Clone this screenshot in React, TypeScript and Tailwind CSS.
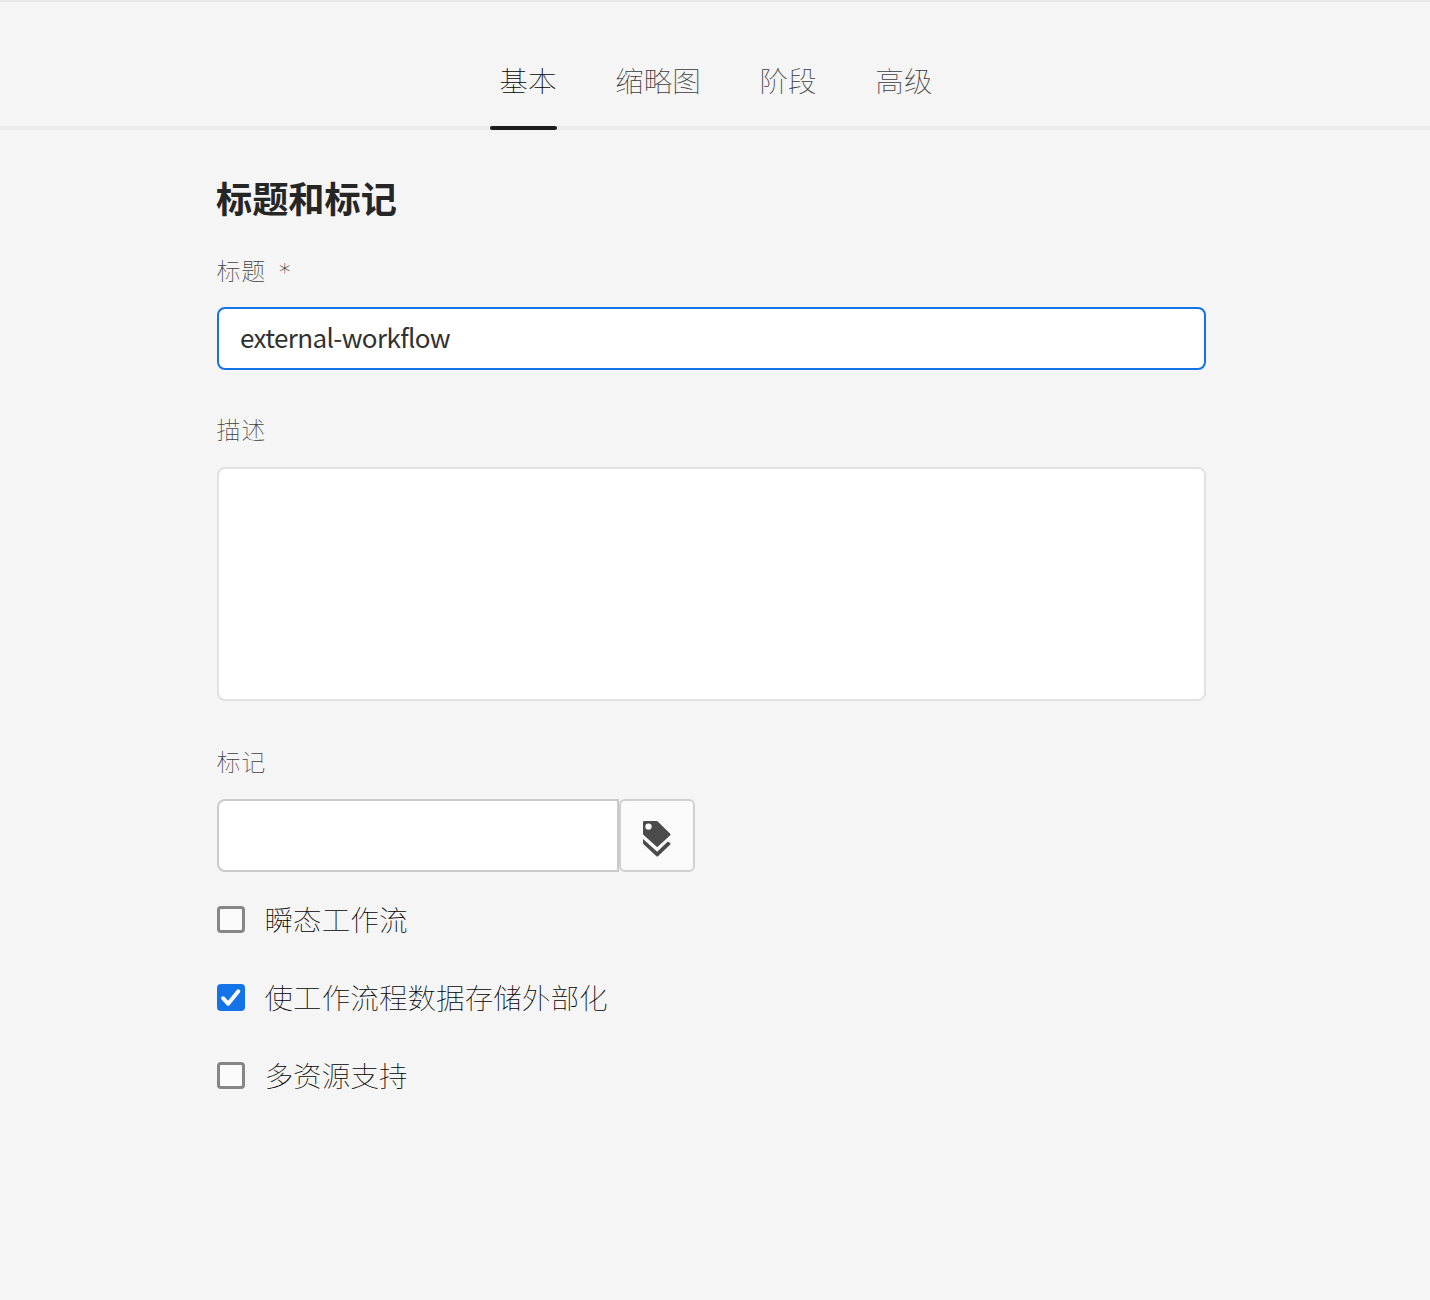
import { useState, type ReactNode } from "react";

const tabs = ["基本", "缩略图", "阶段", "高级"];

function Label({ children }: { children: ReactNode }) {
  return (
    <label className="flex h-6 text-[24px] leading-6 font-thin tracking-[0.7px] text-[#404040]">
      {children}
    </label>
  );
}

function Checkbox({ label, initial = false }: { label: string; initial?: boolean }) {
  const [on, setOn] = useState(initial);
  return (
    <button
      type="button"
      role="checkbox"
      aria-checked={on}
      onClick={() => setOn(!on)}
      className="flex h-[78px] items-center gap-5"
    >
      {on ? (
        <span className="flex h-[27px] w-7 items-center justify-center rounded bg-[#1473e6]">
          <svg width="28" height="27" viewBox="0 0 28 27" fill="none">
            <path d="M6 14.2 L11.2 19.8 L21.3 7.2" stroke="#fff" strokeWidth="3.9" strokeLinecap="round" strokeLinejoin="round" />
          </svg>
        </span>
      ) : (
        <span className="h-[27px] w-7 rounded border-3 border-[#868686] bg-[#fafafa]" />
      )}
      <span className="text-[28.6px] leading-8 font-thin text-black">{label}</span>
    </button>
  );
}

export default function App() {
  const [active, setActive] = useState(0);
  return (
    <div className="h-[1300px] w-full overflow-hidden border-t-2 border-[#e8e8e8] bg-[#f5f5f5] font-['Noto_Sans_CJK_SC',sans-serif]">
      <nav className="flex h-32 gap-[58.6px] border-b-4 border-[#eaeaea] pl-[499.3px]">
        {tabs.map((t, i) => (
          <button
            key={t}
            type="button"
            onClick={() => setActive(i)}
            className={
              i === active
                ? "relative flex h-32 items-start pt-[62px] text-[28.6px] leading-8 font-thin text-black"
                : "relative flex h-32 items-start pt-[62px] text-[28.6px] leading-8 font-thin text-[#3a3a3a]"
            }
          >
            {t}
            {i === active && <span className="absolute right-0 bottom-0 -left-[9px] h-1 rounded-full bg-[#1c1c1c]" />}
          </button>
        ))}
      </nav>

      <main className="ml-[216.5px] w-[989.5px] pt-[45px]">
        <h1 className="-ml-[0.5px] h-11 text-[36.2px] leading-[44px] font-bold text-[#262626]">标题和标记</h1>
        <div className="pt-[39px]">
          <Label>
            标题
            <span className="ml-[13px] pt-0.5 font-['DejaVu_Sans',sans-serif] text-[23px] leading-6 font-extralight text-[#303030]">*</span>
          </Label>
          <input
            defaultValue="external-workflow"
            className="mt-[25px] block h-[63px] w-full rounded-lg border-2 border-[#1473e6] bg-white px-[21.5px] pb-[5px] text-[26px] tracking-[-0.62px] text-[#323232] outline-none"
          />
        </div>
        <div className="pt-[47px]">
          <Label>描述</Label>
          <textarea className="mt-[26px] block h-[234px] w-full resize-none rounded-lg border-2 border-[#e2e2e2] bg-white outline-none" />
        </div>
        <div className="pt-12">
          <Label>标记</Label>
          <div className="mt-[26px] flex h-[73px]">
            <input className="w-[402px] rounded-l-lg border-2 border-[#cacaca] bg-white outline-none" />
            <button type="button" className="flex w-[76px] items-center justify-center rounded-md border-2 border-[#d0d0d0] bg-[#fafafa]">
              <svg width="28" height="36" viewBox="0 0 28 36" className="mt-[6px]" fill="#4b4b4b">
                <path fillRule="evenodd" d="M1.2 0H13.5Q14.2 0 14.8.6L27.2 12.7Q28 13.5 27.2 14.3L15 25.6Q14.2 26.3 13.4 25.6L.6 13.9Q0 13.3 0 12.5V1.2Q0 0 1.2 0ZM5.5 2.4A3.2 3.2 0 1 0 5.5 8.8A3.2 3.2 0 1 0 5.5 2.4Z" />
                <path d="M0 18L14.2 30.7L24.3 21Q25 20.4 25.7 21L27.3 22.2Q28 22.9 27.3 23.6L15 35.2Q14.2 36 13.4 35.2L.6 23.3Q0 22.8 0 22Z" />
              </svg>
            </button>
          </div>
        </div>
        <div className="pt-2">
          <Checkbox label="瞬态工作流" />
          <Checkbox label="使工作流程数据存储外部化" initial />
          <Checkbox label="多资源支持" />
        </div>
      </main>
    </div>
  );
}
